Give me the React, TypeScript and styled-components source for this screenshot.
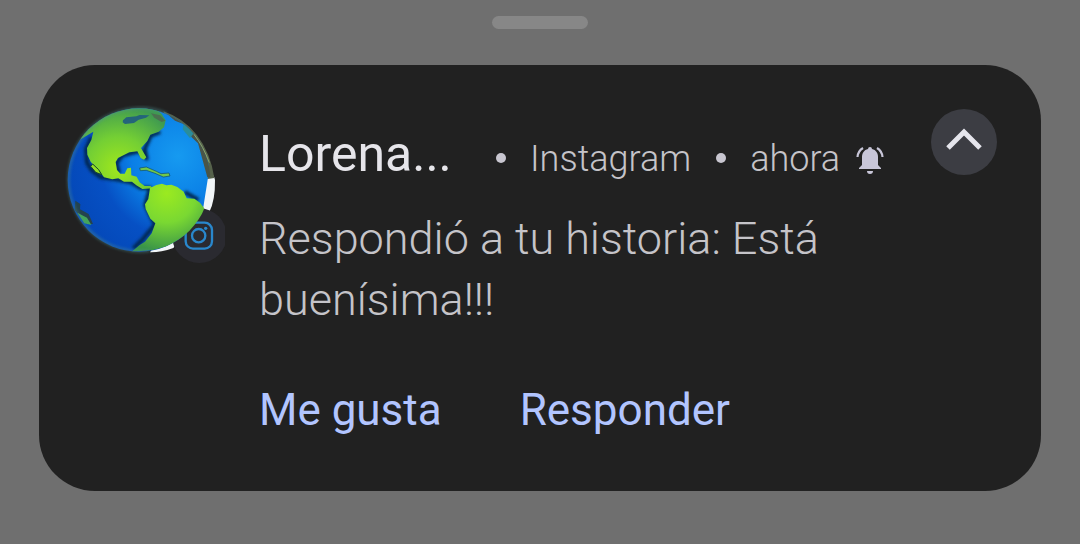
import React from "react";
import styled, { createGlobalStyle } from "styled-components";

const GlobalStyle = createGlobalStyle`
  *, *::before, *::after { box-sizing: border-box; }
  body {
    margin: 0;
    background: #6f6f6f;
    font-family: Roboto, "Liberation Sans", sans-serif;
  }
`;

const Shade = styled.main`
  min-height: 100vh;
  padding: 16px 39px 52px;
  background: #6f6f6f;
`;

const Handle = styled.div`
  width: 96px;
  height: 13px;
  margin: 0 auto 36px;
  border-radius: 7px;
  background: #878787;
`;

const Card = styled.article`
  display: flex;
  align-items: flex-start;
  min-height: 426px;
  padding: 40px 44px 50px 26px;
  border-radius: 56px;
  background: #212121;
`;

const Avatar = styled.svg`
  flex: none;
  width: 160px;
  height: 160px;
  margin-right: 34px;
`;

const Content = styled.div`
  flex: 1;
  min-width: 0;
  padding-top: 19px;
`;

const Header = styled.header`
  display: flex;
  align-items: baseline;
  color: #c8c6d0;
  font-size: 36px;
  font-weight: 300;
  line-height: 60px;
  white-space: nowrap;
`;

const Sender = styled.h1`
  width: 237px;
  margin: 0;
  color: #e6e5ea;
  font-size: 50px;
  font-weight: 400;
  line-height: 60px;
`;

const Detail = styled.span`
  color: #c5c4c9;
`;

const Dot = styled.i`
  flex: none;
  align-self: center;
  width: 10px;
  height: 10px;
  margin: 2px 24px 0 25px;
  border-radius: 50%;
  background: #c8c6d0;

  ${Sender} + & {
    margin-left: 0;
  }
`;

const Bell = styled.svg`
  flex: none;
  align-self: center;
  width: 28px;
  height: 28px;
  margin: 6px 0 0 16px;
`;

const Message = styled.p`
  max-width: 600px;
  margin: 19px 0 0;
  color: #c5c4c9;
  font-size: 45px;
  font-weight: 300;
  line-height: 61px;
`;

const Actions = styled.div`
  display: flex;
  gap: 78px;
  margin-top: 50px;
`;

const Action = styled.button`
  padding: 0;
  border: 0;
  background: none;
  color: #b2c5ff;
  font: 400 44px/60px Roboto, "Liberation Sans", sans-serif;
  cursor: pointer;
`;

const Collapse = styled.button`
  display: grid;
  flex: none;
  place-items: center;
  width: 66px;
  height: 66px;
  margin-top: 4px;
  padding: 0 0 4px;
  border: 0;
  border-radius: 50%;
  background: #3c3d43;
  cursor: pointer;
`;

function Globe() {
  return (
    <Avatar viewBox="45 45 480 480" role="img" aria-label="Lorena, Instagram">
      <defs>
        <radialGradient id="ocean" cx="0.78" cy="0.34" r="0.8">
          <stop offset="0" stopColor="#169af0" />
          <stop offset="0.4" stopColor="#0a7fe6" />
          <stop offset="0.68" stopColor="#0650c4" />
          <stop offset="1" stopColor="#0448b8" />
        </radialGradient>
        <radialGradient id="north" gradientUnits="userSpaceOnUse" cx="205" cy="235" r="190">
          <stop offset="0" stopColor="#a0e81c" />
          <stop offset="0.5" stopColor="#74cf34" />
          <stop offset="1" stopColor="#3f9a50" />
        </radialGradient>
        <radialGradient id="south" gradientUnits="userSpaceOnUse" cx="350" cy="310" r="175">
          <stop offset="0" stopColor="#9bea20" />
          <stop offset="0.5" stopColor="#7ad832" />
          <stop offset="1" stopColor="#3a9548" />
        </radialGradient>
        <radialGradient id="rim">
          <stop offset="0.91" stopColor="#58a8a0" stopOpacity="0" />
          <stop offset="0.97" stopColor="#5fa9a5" stopOpacity="0.7" />
          <stop offset="1" stopColor="#2b474a" stopOpacity="0.8" />
        </radialGradient>
        <clipPath id="sphere">
          <ellipse cx="267" cy="270" rx="214" ry="215" />
        </clipPath>
        <filter id="soft" x="-10%" y="-10%" width="120%" height="120%">
          <feGaussianBlur stdDeviation="4" />
        </filter>
      </defs>
      <path d="M470 240Q492 250 495 270Q496 330 478 366L440 380L370 474Q330 488 300 487Z" fill="#f2f6f8" />
      <path d="M340 64Q400 84 440 134Q482 188 493 264L468 268L425 150L350 82Z" fill="#56624b" />
      <circle cx="448" cy="437" r="82" fill="#2a2a30" />
      <g fill="none" stroke="#2987cc" strokeWidth="7">
        <rect x="407" y="398" width="79" height="78" rx="22" />
        <circle cx="446" cy="437" r="20" />
      </g>
      <circle cx="467" cy="415" r="5" fill="#2987cc" />
      <g clipPath="url(#sphere)">
        <path d="M45 45H480L476 250L460 352L405 438L370 464L300 495H45Z" fill="url(#ocean)" />
        <path d="M325 62L355 75L375 92L400 102L425 142L444 160L472 262L500 262L480 130L400 50Z" fill="#4a5548" />
        <path d="M402 98L432 128L420 145L398 118Z" fill="#2a8d9a" />
        <g fill="none" stroke="#06284f" strokeWidth="12" strokeLinejoin="round" filter="url(#soft)">
          <path d="M124 142L108 178L111 218L126 242L151 261L200 268L243 277L272 294L300 294L286 345L315 404L276 450L250 475" />
          <path d="M331 126L302 137L284 177L290 206L268 183L217 196L199 219L207 250M404 306L445 330" />
        </g>
        <path
          d="M124 150L130 125L88 150L130 50H310L335 72L347 91L342 112L326 125L301 134L292 153L273 174L289 202L282 209L272 204L262 184L238 187L204 204L197 216L201 240L211 251L224 251L232 235L243 233L244 256L260 260L269 277L284 288L302 288L308 295L277 297L259 286L246 275L222 275L205 265L187 268L162 262L149 244L136 232L122 215L112 194L111 174Z"
          fill="url(#north)"
        />
        <path d="M128 222L146 239L155 254L137 247L122 229Z" fill="#93dd26" stroke="#15422a" strokeWidth="3" />
        <path
          d="M300 294L319 285L336 281L349 286L364 284L382 291L401 305L410 325L433 326L450 338L462 354L460 376L440 404L424 420L405 438L372 463L330 475L310 480L245 485L269 465L285 455L305 430L316 400L301 386L287 357L285 343L295 327Z"
          fill="url(#south)"
        />
        <path d="M269 234L289 231L319 244L333 251L357 249L360 258L340 261L315 250L289 241L271 242Z" fill="#72c84a" stroke="#0b4870" strokeWidth="2" />
        <path d="M219 91L229 82L259 79L269 75L298 76L288 83L266 89L252 99L225 102L218 97Z" fill="#24647a" />
        <path d="M303 70L330 76L346 92L335 96L313 83Z" fill="#4b7150" />
        <path d="M76 332L91 342L90 358L116 372L129 402L110 402L74 360Z" fill="#24434e" />
        <path d="M82 368L111 383L124 405L103 400Z" fill="#43a55a" />
      </g>
      <path d="M350 70A214 215 0 1 0 300 482" fill="none" stroke="#4f8f90" strokeOpacity="0.6" strokeWidth="6" filter="url(#soft)" />
      <path d="M432 133Q460 169 478 218" fill="none" stroke="#8ba46a" strokeWidth="3" />
    </Avatar>
  );
}

export default function App() {
  return (
    <>
      <GlobalStyle />
      <Shade>
        <Handle />
        <Card>
          <Globe />
          <Content>
            <Header>
              <Sender>Lorena...</Sender>
              <Dot />
              <Detail>Instagram</Detail>
              <Dot />
              <Detail>ahora</Detail>
              <Bell viewBox="0 0 28 28" aria-hidden="true">
                <path d="M14 1a2 2 0 0 1 2 2c4 1 6 4 6 8v8l3 3v1H3v-1l3-3v-8c0-4 2-7 6-8a2 2 0 0 1 2-2zM11 25h6a3 3 0 0 1-6 0z" fill="#c8c6d8" />
                <path d="M7 2Q2 5 1.500 11M21 2Q26 5 26.500 11" fill="none" stroke="#c8c6d8" strokeWidth="2.200" />
              </Bell>
            </Header>
            <Message>Respondió a tu historia: Está buenísima!!!</Message>
            <Actions>
              <Action type="button">Me gusta</Action>
              <Action type="button">Responder</Action>
            </Actions>
          </Content>
          <Collapse type="button" aria-label="Contraer">
            <svg width="40" height="26" viewBox="0 0 40 26" fill="none" stroke="#e5e5ec" strokeWidth="5" aria-hidden="true">
              <path d="M4 21L20 5L36 21" />
            </svg>
          </Collapse>
        </Card>
      </Shade>
    </>
  );
}
